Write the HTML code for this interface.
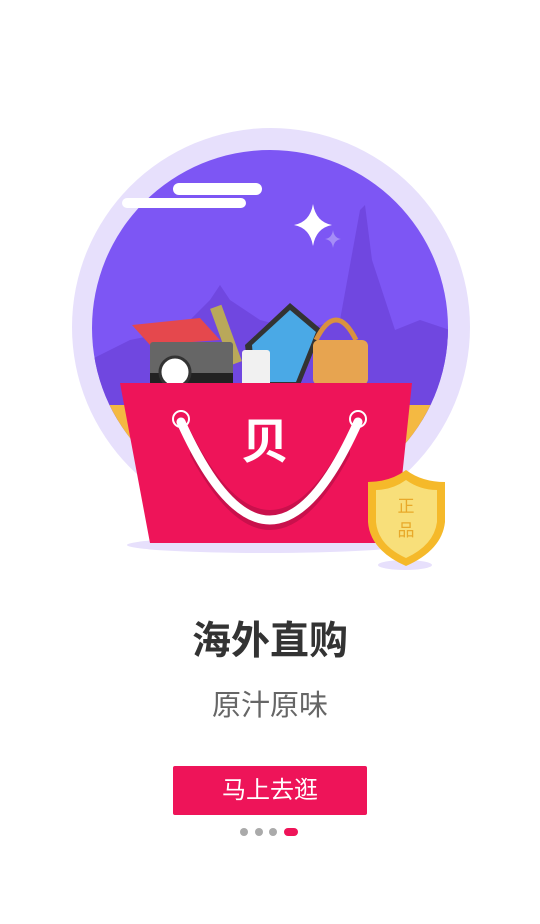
<!DOCTYPE html>
<html><head><meta charset="utf-8"><style>
body{margin:0;width:540px;height:924px;background:#fff;overflow:hidden;position:relative;font-family:"Liberation Sans","Noto Sans CJK SC",sans-serif}
.t{position:absolute;left:0;width:540px;text-align:center}
</style></head><body>
<svg width="540" height="600" style="position:absolute;left:0;top:0">
<defs><clipPath id="c"><circle cx="270" cy="328" r="178"/></clipPath></defs>
<circle cx="271" cy="327" r="199" fill="#e7e0fc"/>
<circle cx="270" cy="328" r="178" fill="#7d56f4"/>
<g clip-path="url(#c)">
<path d="M90 360 L130 340 L180 330 L210 300 L220 285 L230 300 L260 320 L300 330 L340 320 L360 210 L365 205 L372 260 L395 330 L420 320 L450 330 L450 420 L90 420Z" fill="#7047e0"/>
<rect x="90" y="405" width="370" height="60" fill="#f4b942"/>
</g>
<rect x="173" y="183" width="89" height="12" rx="6" fill="#fff"/>
<rect x="122" y="198" width="124" height="10" rx="5" fill="#fff"/>
<path d="M313 204 Q316 222 332 225 Q316 228 313 246 Q310 228 294 225 Q310 222 313 204Z" fill="#fff"/>
<path d="M333 230 Q334 238 341 239 Q334 240 333 248 Q332 240 325 239 Q332 238 333 230Z" fill="#a58df7"/>
<path d="M132 325 L200 318 L220 340 L150 345Z" fill="#e5484d"/>
<rect x="220" y="305" width="12" height="60" fill="#b9a85a" transform="rotate(-20 226 335)"/>
<path d="M245 345 L290 303 L322 330 L300 385 L250 385Z" fill="#333"/>
<path d="M252 345 L290 310 L316 332 L296 382 L255 382Z" fill="#4aa9e6"/>
<rect x="242" y="350" width="28" height="40" rx="3" fill="#f1f1f1"/>
<path d="M316 340 Q336 300 356 340" stroke="#d9913f" stroke-width="5" fill="none"/>
<rect x="313" y="340" width="55" height="45" rx="6" fill="#e7a450"/>
<rect x="150" y="342" width="83" height="42" rx="3" fill="#666"/>
<rect x="150" y="373" width="83" height="12" fill="#222"/>
<circle cx="175" cy="372" r="15" fill="#fff" stroke="#333" stroke-width="3"/>
<ellipse cx="265" cy="545" rx="138" ry="8" fill="#e7e0fc"/>
<ellipse cx="405" cy="565" rx="27" ry="5" fill="#e7e0fc"/>
<path d="M120 383 L412 383 L395 543 L150 543Z" fill="#ee1459"/>
<path d="M190 430 Q270 590 350 430 L350 455 Q270 605 190 455Z" fill="#c9104c"/>
<path d="M181 422 Q270 618 358 422" stroke="#fff" stroke-width="9" fill="none" stroke-linecap="round"/>
<circle cx="181" cy="419" r="8" fill="none" stroke="#fff" stroke-width="2"/>
<circle cx="358" cy="419" r="8" fill="none" stroke="#fff" stroke-width="2"/>
<text x="265" y="458" font-size="48" font-weight="bold" fill="#fff" text-anchor="middle" font-family="Noto Sans CJK SC,sans-serif">贝</text>
<path d="M406 470 Q390 482 368 482 L368 522 Q370 550 406 566 Q442 550 445 522 L445 482 Q422 482 406 470Z" fill="#f5b92a"/>
<path d="M406 480 Q392 490 376 490 L376 522 Q378 545 406 558 Q434 545 437 522 L437 490 Q420 490 406 480Z" fill="#f8df7a"/>
<text x="406" y="512" font-size="17" fill="#e8a92a" text-anchor="middle" font-family="Noto Sans CJK SC,sans-serif">正</text>
<text x="406" y="536" font-size="17" fill="#e8a92a" text-anchor="middle" font-family="Noto Sans CJK SC,sans-serif">品</text>
</svg>
<div class="t" style="top:617px;font-size:39px;font-weight:bold;color:#333;line-height:50px">海外直购</div>
<div class="t" style="top:687px;font-size:29px;color:#666;line-height:38px">原汁原味</div>
<div style="position:absolute;left:173px;top:766px;width:194px;height:49px;background:#ee1459;border-radius:2px;color:#fff;font-size:24px;line-height:49px;text-align:center">马上去逛</div>
<div style="position:absolute;top:828px;left:240px;width:8px;height:8px;border-radius:4px;background:#aaa"></div>
<div style="position:absolute;top:828px;left:255px;width:8px;height:8px;border-radius:4px;background:#aaa"></div>
<div style="position:absolute;top:828px;left:269px;width:8px;height:8px;border-radius:4px;background:#aaa"></div>
<div style="position:absolute;top:828px;left:284px;width:14px;height:8px;border-radius:4px;background:#ee1459"></div>
</body></html>
